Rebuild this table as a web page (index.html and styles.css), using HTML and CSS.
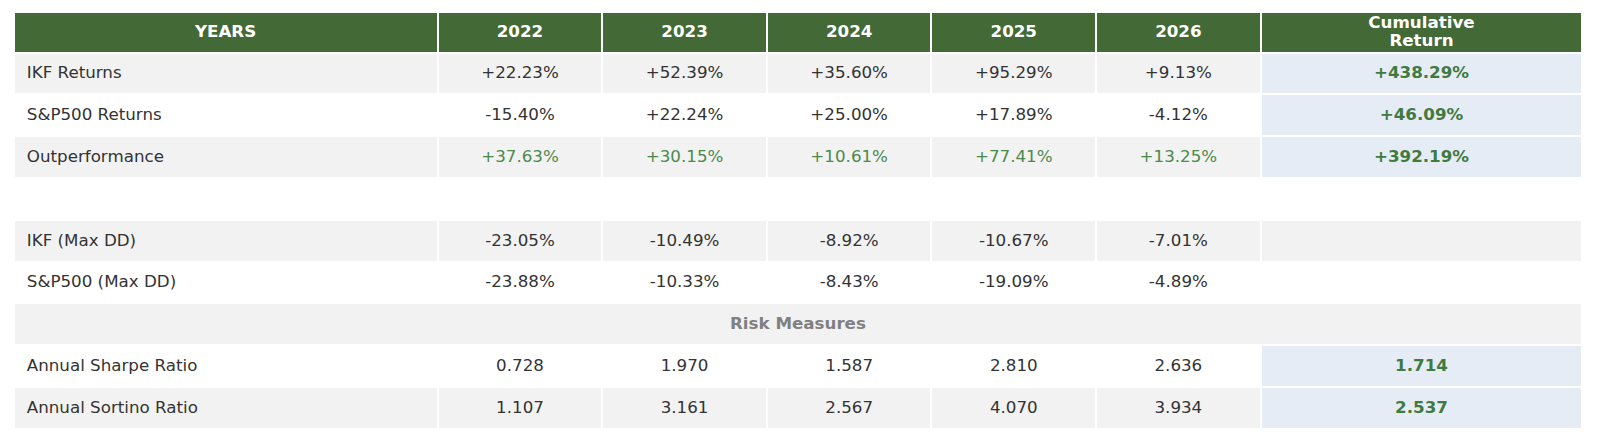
FILE: index.html
```html
<!DOCTYPE html>
<html lang="en">
<head>
<meta charset="utf-8">
<title>IKF vs S&amp;P500 Performance</title>
<link rel="stylesheet" href="styles.css">
</head>
<body>
<main class="page">
  <table class="perf">
    <colgroup>
      <col class="c-label">
      <col class="c-year"><col class="c-year"><col class="c-year"><col class="c-year"><col class="c-year">
      <col class="c-cum">
    </colgroup>
    <thead>
      <tr class="head">
        <th>YEARS</th>
        <th>2022</th><th>2023</th><th>2024</th><th>2025</th><th>2026</th>
        <th class="two-line">Cumulative<br>Return</th>
      </tr>
    </thead>
    <tbody>
      <tr class="grey">
        <td class="label">IKF Returns</td>
        <td>+22.23%</td><td>+52.39%</td><td>+35.60%</td><td>+95.29%</td><td>+9.13%</td>
        <td class="cum">+438.29%</td>
      </tr>
      <tr class="white">
        <td class="label">S&amp;P500 Returns</td>
        <td>-15.40%</td><td>+22.24%</td><td>+25.00%</td><td>+17.89%</td><td>-4.12%</td>
        <td class="cum">+46.09%</td>
      </tr>
      <tr class="grey pos">
        <td class="label">Outperformance</td>
        <td>+37.63%</td><td>+30.15%</td><td>+10.61%</td><td>+77.41%</td><td>+13.25%</td>
        <td class="cum">+392.19%</td>
      </tr>
      <tr class="white">
        <td class="label"></td>
        <td></td><td></td><td></td><td></td><td></td>
        <td></td>
      </tr>
      <tr class="grey">
        <td class="label">IKF (Max DD)</td>
        <td>-23.05%</td><td>-10.49%</td><td>-8.92%</td><td>-10.67%</td><td>-7.01%</td>
        <td></td>
      </tr>
      <tr class="white">
        <td class="label">S&amp;P500 (Max DD)</td>
        <td>-23.88%</td><td>-10.33%</td><td>-8.43%</td><td>-19.09%</td><td>-4.89%</td>
        <td></td>
      </tr>
      <tr class="grey">
        <td class="section" colspan="7">Risk Measures</td>
      </tr>
      <tr class="white">
        <td class="label">Annual Sharpe Ratio</td>
        <td>0.728</td><td>1.970</td><td>1.587</td><td>2.810</td><td>2.636</td>
        <td class="cum">1.714</td>
      </tr>
      <tr class="grey">
        <td class="label">Annual Sortino Ratio</td>
        <td>1.107</td><td>3.161</td><td>2.567</td><td>4.070</td><td>3.934</td>
        <td class="cum">2.537</td>
      </tr>
    </tbody>
  </table>
</main>
</body>
</html>
```

FILE: styles.css
```css
html, body {
  margin: 0;
  padding: 0;
  background: #ffffff;
}

.page {
  padding: 10.7px 0 0 12.5px;
}

.perf {
  table-layout: fixed;
  width: 1568.9px;
  border-collapse: separate;
  border-spacing: 2px;
  font-family: "DejaVu Sans", "Liberation Sans", sans-serif;
  font-size: 16.7px;
  color: #333333;
}

.c-label { width: 422.2px; }
.c-year { width: 162.6px; }
.c-cum { width: 319.7px; }

.perf th,
.perf td {
  padding: 0;
  border: 0;
  text-align: center;
  vertical-align: middle;
  white-space: nowrap;
  line-height: 19px;
  box-sizing: border-box;
}

.head th {
  height: 39px;
  background: #436a36;
  color: #ffffff;
  font-weight: bold;
  padding-bottom: 2px;
}

.head th.two-line {
  padding-bottom: 1.5px;
  line-height: 18.5px;
}

.perf tbody td {
  height: 39.8px;
  padding-bottom: 1.5px;
}

.grey td { background: #f2f2f2; }
.white td { background: #ffffff; }

.perf td.label {
  text-align: left;
  padding-left: 12.3px;
}

.pos td:not(.label):not(.cum) {
  color: #4b8a4b;
}

.perf td.cum {
  background: #e6ecf6;
  color: #3f7a3f;
  font-weight: bold;
}

.perf td.section {
  color: #808080;
  font-weight: bold;
}
```
